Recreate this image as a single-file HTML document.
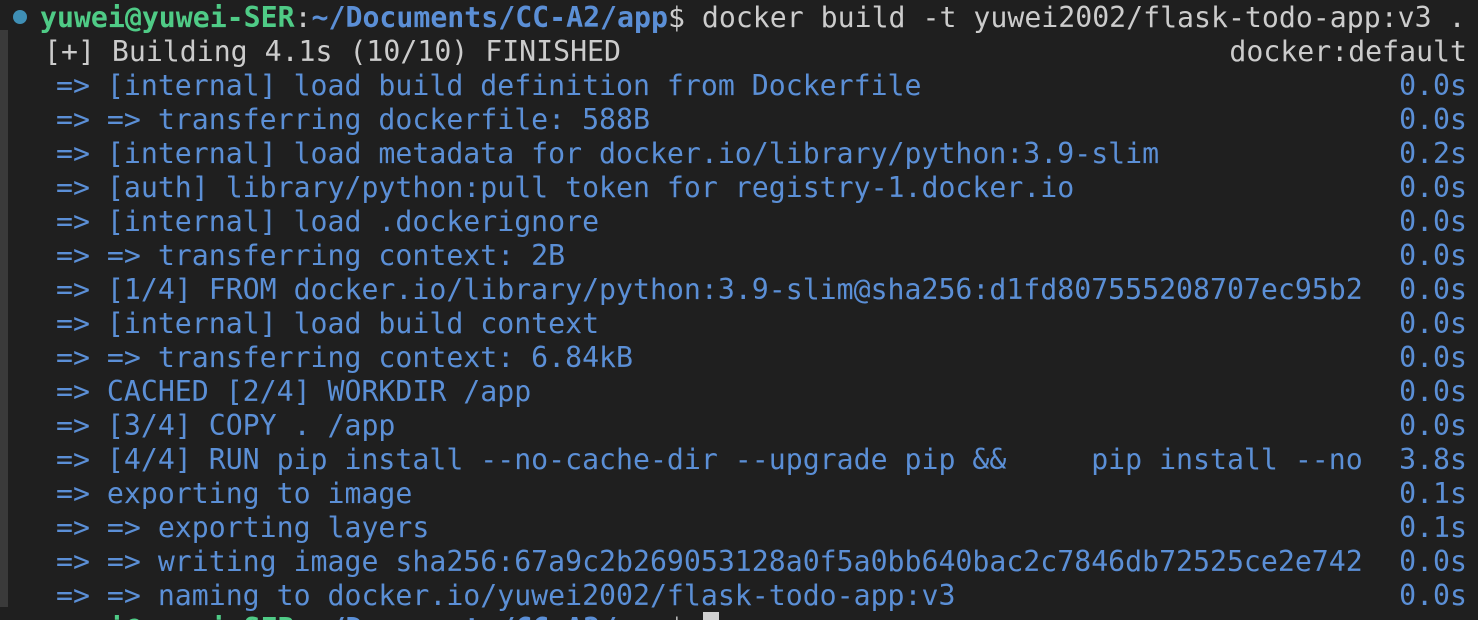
<!DOCTYPE html>
<html><head><style>
html,body{margin:0;padding:0;background:#1f1f1f;width:1478px;height:620px;overflow:hidden}
.t{position:absolute;left:0;top:0;width:1478px;height:620px;overflow:hidden;font-family:"DejaVu Sans Mono","Liberation Mono",monospace;font-size:28.2px;color:#cccccc}
.l{position:absolute;height:34px;line-height:34px;white-space:pre;left:56px;right:11px;color:#5b8fd6;top:1px}
.l .r{position:absolute;right:0;top:0}
.g{color:#4fcb86;font-weight:bold}
.b{color:#5b8fd6}
.w{color:#cccccc}
.bar{position:absolute;left:0;top:30px;width:8px;height:577px;background:#3a3a3a}
.dot{position:absolute;left:13px;top:10px;width:14px;height:14px;border-radius:50%;background:#3f8fb5}
</style></head><body><div class="t">
<div class="bar"></div><div class="dot"></div>
<div class="l" style="top:1px;left:40px"><span class="g">yuwei@yuwei-SER</span><span class="w">:</span><span class="b" style="font-weight:bold">~/Documents/CC-A2/app</span><span class="w">$ docker build -t yuwei2002/flask-todo-app:v3 .</span></div>
<div class="l w" style="top:35px;left:44px;color:#cccccc">[+] Building 4.1s (10/10) FINISHED<span class="r">docker:default</span></div>
<div class="l" style="top:69px">=&gt; [internal] load build definition from Dockerfile<span class="r">0.0s</span></div>
<div class="l" style="top:103px">=&gt; =&gt; transferring dockerfile: 588B<span class="r">0.0s</span></div>
<div class="l" style="top:137px">=&gt; [internal] load metadata for docker.io/library/python:3.9-slim<span class="r">0.2s</span></div>
<div class="l" style="top:171px">=&gt; [auth] library/python:pull token for registry-1.docker.io<span class="r">0.0s</span></div>
<div class="l" style="top:205px">=&gt; [internal] load .dockerignore<span class="r">0.0s</span></div>
<div class="l" style="top:239px">=&gt; =&gt; transferring context: 2B<span class="r">0.0s</span></div>
<div class="l" style="top:273px">=&gt; [1/4] FROM docker.io/library/python:3.9-slim@sha256:d1fd807555208707ec95b2<span class="r">0.0s</span></div>
<div class="l" style="top:307px">=&gt; [internal] load build context<span class="r">0.0s</span></div>
<div class="l" style="top:341px">=&gt; =&gt; transferring context: 6.84kB<span class="r">0.0s</span></div>
<div class="l" style="top:375px">=&gt; CACHED [2/4] WORKDIR /app<span class="r">0.0s</span></div>
<div class="l" style="top:409px">=&gt; [3/4] COPY . /app<span class="r">0.0s</span></div>
<div class="l" style="top:443px">=&gt; [4/4] RUN pip install --no-cache-dir --upgrade pip &amp;&amp;     pip install --no<span class="r">3.8s</span></div>
<div class="l" style="top:477px">=&gt; exporting to image<span class="r">0.1s</span></div>
<div class="l" style="top:511px">=&gt; =&gt; exporting layers<span class="r">0.1s</span></div>
<div class="l" style="top:545px">=&gt; =&gt; writing image sha256:67a9c2b269053128a0f5a0bb640bac2c7846db72525ce2e742<span class="r">0.0s</span></div>
<div class="l" style="top:579px">=&gt; =&gt; naming to docker.io/yuwei2002/flask-todo-app:v3<span class="r">0.0s</span></div>
<div class="l" style="top:612px;left:40px"><span class="g">yuwei@yuwei-SER</span><span class="w">:</span><span class="b" style="font-weight:bold">~/Documents/CC-A2/app</span><span class="w">$ </span></div>
<div style="position:absolute;left:703px;top:612px;width:16px;height:10px;background:#d0d0d0"></div>
</div></body></html>
